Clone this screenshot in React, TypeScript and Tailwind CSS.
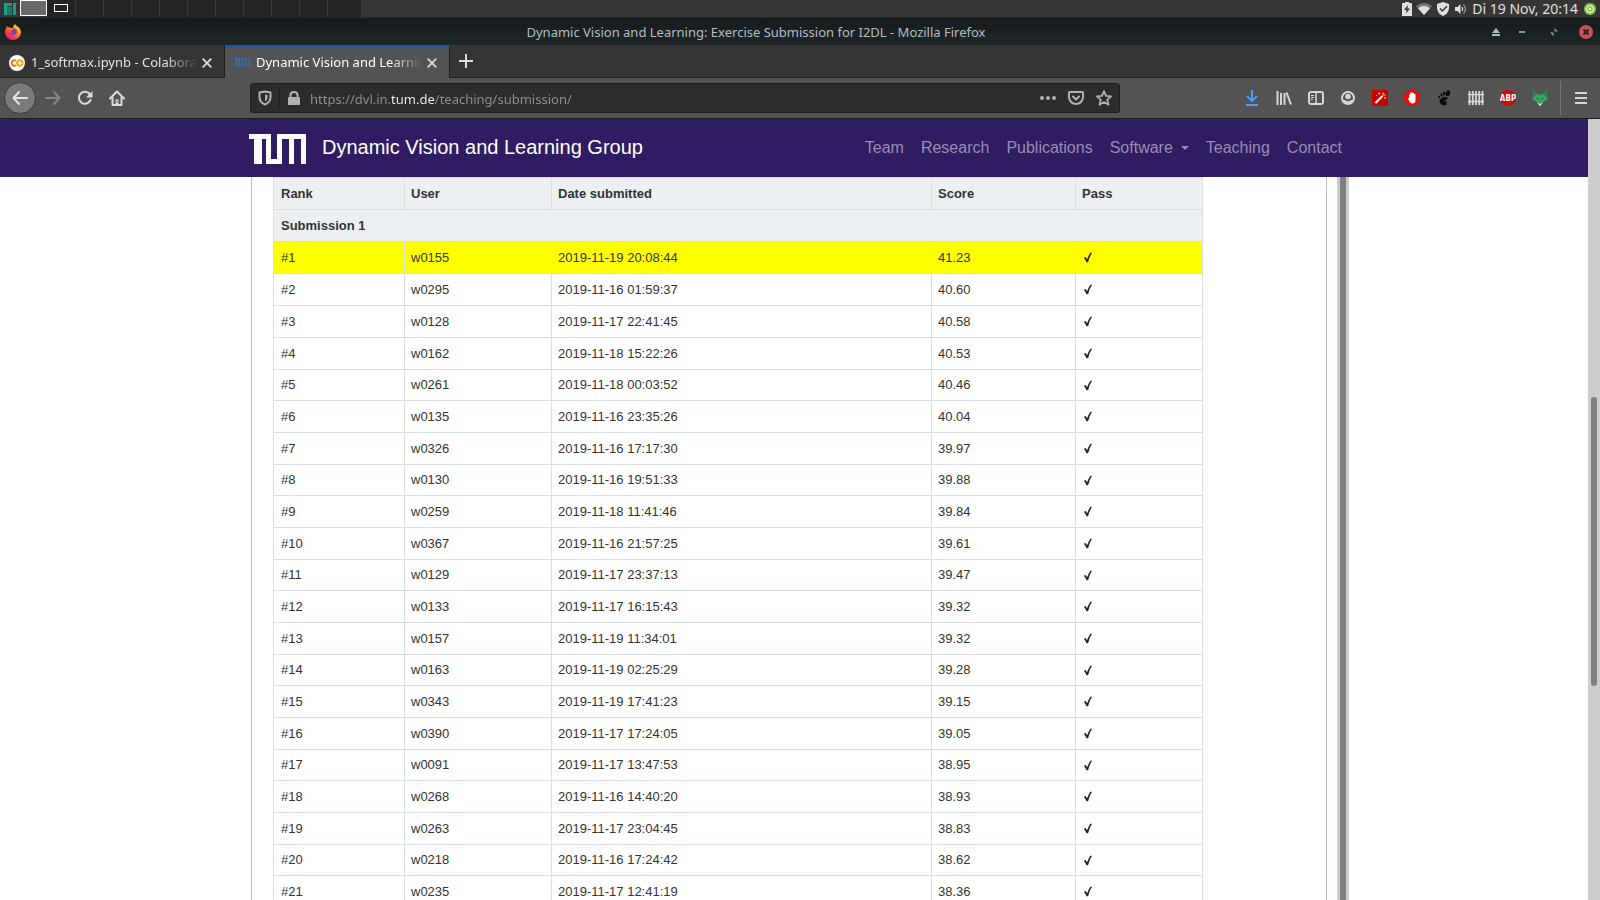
import React from "react";

type Row = [user: string, date: string, score: string];

const rows: Row[] = [
  ["w0155", "2019-11-19 20:08:44", "41.23"],
  ["w0295", "2019-11-16 01:59:37", "40.60"],
  ["w0128", "2019-11-17 22:41:45", "40.58"],
  ["w0162", "2019-11-18 15:22:26", "40.53"],
  ["w0261", "2019-11-18 00:03:52", "40.46"],
  ["w0135", "2019-11-16 23:35:26", "40.04"],
  ["w0326", "2019-11-16 17:17:30", "39.97"],
  ["w0130", "2019-11-16 19:51:33", "39.88"],
  ["w0259", "2019-11-18 11:41:46", "39.84"],
  ["w0367", "2019-11-16 21:57:25", "39.61"],
  ["w0129", "2019-11-17 23:37:13", "39.47"],
  ["w0133", "2019-11-17 16:15:43", "39.32"],
  ["w0157", "2019-11-19 11:34:01", "39.32"],
  ["w0163", "2019-11-19 02:25:29", "39.28"],
  ["w0343", "2019-11-19 17:41:23", "39.15"],
  ["w0390", "2019-11-17 17:24:05", "39.05"],
  ["w0091", "2019-11-17 13:47:53", "38.95"],
  ["w0268", "2019-11-16 14:40:20", "38.93"],
  ["w0263", "2019-11-17 23:04:45", "38.83"],
  ["w0218", "2019-11-16 17:24:42", "38.62"],
  ["w0235", "2019-11-17 12:41:19", "38.36"],
];

const TUM_PATH = "M0 0H22V25H28V0H57V30H52V5H45V30H40V5H33V30H17V5H13V30H5V5H0Z";

function Icon({ size = 16, children }: { size?: number; children: React.ReactNode }) {
  return (
    <svg width={size} height={size} viewBox="0 0 16 16" fill="none" aria-hidden="true" className="shrink-0">
      {children}
    </svg>
  );
}

function Panel() {
  return (
    <div className="flex h-[18px] shrink-0 items-stretch border-b border-[#252a29] bg-[#353535]">
      <button aria-label="Applications" className="flex w-5 items-center justify-end pr-1">
        <svg width="12" height="12" viewBox="0 0 12 12" fill="#16a085" aria-hidden="true">
          <path d="M0 0H8V3H3.5V12H0ZM4.5 4H8V12H4.5ZM9 0H12V12H9Z" />
          <path d="M4.5 4H8V12H4.5Z" fill="#12806b" />
        </svg>
      </button>
      <button aria-label="Workspace 1" className="h-4 w-[27px] border border-white bg-[#686868]" />
      <button
        aria-label="Workspace 2"
        className="flex w-[29px] items-center justify-center border-r border-[#383838] bg-[#232323] pb-px"
      >
        <span className="h-2 w-[14px] border border-white" />
      </button>
      {[3, 4, 5, 6, 7, 8, 9, 10, 11].map((n) => (
        <button key={n} aria-label={`Workspace ${n}`} className="w-7 border-r border-[#383838] bg-[#232323]" />
      ))}
      <button aria-label="Workspace 12" className="w-[33px] bg-[#232323]" />
      <div className="ml-auto flex items-center gap-1 pr-1 text-[#e0e0e0]">
        <svg width="10" height="14" viewBox="0 0 10 14" aria-hidden="true">
          <path fill="#dfdfdf" d="M3 0H7V1H10V14H0V1H3Z" />
          <path fill="#353535" d="M6 3 2 8H4.5L4 11.500 8 6.500H5.500Z" />
        </svg>
        <svg width="16" height="12" viewBox="0 0 16 12" aria-hidden="true">
          <path fill="#777" d="M0 3Q8-3 16 3L8 12Z" />
          <path fill="#dfdfdf" d="M2 5.200Q8 1 14 5.200L8 12Z" />
        </svg>
        <svg width="14" height="14" viewBox="0 0 14 14" aria-hidden="true">
          <path fill="#dfdfdf" d="M7 0 13 2V6Q13 11 7 14Q1 11 1 6V2Z" />
          <path fill="none" stroke="#353535" strokeWidth="1.500" d="M4 6.500 6.300 9 11 4.200" />
        </svg>
        <svg width="14" height="12" viewBox="0 0 14 12" aria-hidden="true">
          <path fill="#dfdfdf" d="M1 4H3.500L6.500 1V11L3.500 8H1Z" />
          <path fill="none" stroke="#dfdfdf" strokeWidth="1.200" d="M8 4Q9.500 6 8 8" />
          <path fill="none" stroke="#999" strokeWidth="1.200" d="M9.500 1.500Q13.500 6 9.500 10.500" />
        </svg>
        <time className="text-[14px] leading-4">Di 19 Nov, 20:14</time>
        <svg width="12" height="12" viewBox="0 0 12 12" className="ml-[2px]" aria-hidden="true">
          <circle cx="6" cy="6" r="6" fill="#87c540" />
          <circle cx="6" cy="6" r="3.500" fill="none" stroke="#fff" />
          <circle cx="6" cy="6" r="1.300" fill="#fff" />
        </svg>
      </div>
    </div>
  );
}

function FirefoxLogo() {
  return (
    <svg width="16" height="16" viewBox="0 0 16 16" aria-hidden="true">
      <defs>
        <linearGradient id="fx" x1="1" y1="0" x2=".2" y2="1">
          <stop offset="0" stopColor="#fff44f" />
          <stop offset=".4" stopColor="#ff980e" />
          <stop offset=".75" stopColor="#ff3647" />
          <stop offset="1" stopColor="#e31587" />
        </linearGradient>
      </defs>
      <path
        fill="url(#fx)"
        d="M10 0Q11.500 2 13 3L14 3.500Q16 6 16 8.500A8 7.500 0 0 1 0 8.500Q0 5 1.500 3.500V2L3.500 3.500 5 2.500V4L8 4Q8 1.500 10 0Z"
      />
      <path fill="#7b3fc8" d="M8 4.500Q12 4 12 8Q11.500 11 8 11Q5 11 4.500 8.500Q6 9.500 7.500 8.500L5 7 8 6Z" />
    </svg>
  );
}

function TitleBar() {
  return (
    <div className="grid h-[27px] shrink-0 grid-cols-[1fr_auto_1fr] items-center bg-linear-to-b from-[#151b1d] to-[#1f2628] pl-[5px] pr-[7px]">
      <FirefoxLogo />
      <p className="pr-[86px] text-[13px] leading-5 text-[#b5bcc4]">
        Dynamic Vision and Learning: Exercise Submission for I2DL - Mozilla Firefox
      </p>
      <div className="flex items-center justify-end gap-[18px]">
        <button aria-label="Shade">
          <svg width="8" height="8" viewBox="0 0 8 8" fill="#aebbbb" aria-hidden="true">
            <path d="M4 0 8 5H0ZM0 6H8V8H0Z" />
          </svg>
        </button>
        <button aria-label="Minimize">
          <svg width="8" height="8" viewBox="0 0 8 8" fill="#8d9999" aria-hidden="true">
            <path d="M1 3H7V5H1Z" />
          </svg>
        </button>
        <button aria-label="Restore" className="ml-[6px]">
          <svg width="8" height="8" viewBox="0 0 8 8" fill="#8d9999" aria-hidden="true">
            <path d="M4.500 0V3.500H8ZM0 4.500H3.500V8Z" />
          </svg>
        </button>
        <button aria-label="Close window" className="ml-[3px]">
          <svg width="14" height="14" viewBox="0 0 14 14" aria-hidden="true">
            <circle cx="7" cy="7" r="7" fill="#cb4f58" />
            <path d="M4.500 4.500 9.500 9.500M9.500 4.500 4.500 9.500" stroke="#222" strokeWidth="2" />
          </svg>
        </button>
      </div>
    </div>
  );
}

function CloseGlyph() {
  return (
    <svg width="10" height="10" viewBox="0 0 10 10" stroke="#dcdcdc" strokeWidth="1.800" aria-hidden="true">
      <path d="M.7.7 9.300 9.300M9.300.7.7 9.300" />
    </svg>
  );
}

function TabStrip() {
  return (
    <div className="flex h-[33px] shrink-0 items-stretch bg-[#353535] text-[13px] text-[#e4e4e4]" role="tablist">
      <div className="flex w-[225px] items-center border-b border-r border-[#202020] pl-[9px] pr-3 pt-[3px]">
        <svg width="16" height="16" viewBox="0 0 16 16" className="shrink-0" aria-hidden="true">
          <circle cx="8" cy="8" r="8" fill="#fff" />
          <g fill="none" strokeWidth="2">
            <circle cx="10.800" cy="8" r="2.700" stroke="#f9ab00" />
            <path d="M7 5.800A2.700 2.700 0 1 0 7 10.200" stroke="#e8710a" />
          </g>
        </svg>
        <button
          role="tab"
          aria-selected="false"
          className="ml-[6px] mr-1 min-w-0 flex-1 overflow-hidden whitespace-nowrap text-left mask-r-from-80%"
        >
          1_softmax.ipynb - Colaboratory
        </button>
        <button aria-label="Close tab 1">
          <CloseGlyph />
        </button>
      </div>
      <div className="flex w-[225px] items-center border-r border-t-2 border-r-[#202020] border-t-[#1557a0] bg-[#535353] pl-[9px] pr-3">
        <svg width="16" height="9" viewBox="0 0 57 30" className="shrink-0" aria-hidden="true">
          <path d={TUM_PATH} fill="#3070b3" />
        </svg>
        <button
          role="tab"
          aria-selected="true"
          className="ml-[6px] mr-1 min-w-0 flex-1 overflow-hidden whitespace-nowrap text-left text-white mask-r-from-80%"
        >
          Dynamic Vision and Learning
        </button>
        <button aria-label="Close tab 2">
          <CloseGlyph />
        </button>
      </div>
      <div className="flex flex-1 items-center border-b border-[#202020] pl-[9px]">
        <button aria-label="New tab">
          <svg width="14" height="14" viewBox="0 0 14 14" stroke="#dcdcdc" strokeWidth="2" aria-hidden="true">
            <path d="M7 0V14M0 7H14" />
          </svg>
        </button>
      </div>
    </div>
  );
}

function Toolbar() {
  return (
    <div className="flex h-[41px] shrink-0 items-center border-b border-[#1c1a26] bg-[#535353] pl-1 pr-[13px]">
      <div className="flex min-w-0 flex-[246] items-center">
        <button
          aria-label="Back"
          className="flex size-8 items-center justify-center rounded-full border border-[#3b3b3b] bg-[#7a7a7a]"
        >
          <Icon>
            <path d="M15 8H1.500M7 2 1.500 8 7 14" stroke="#e2e2e2" strokeWidth="2" strokeLinecap="round" strokeLinejoin="round" />
          </Icon>
        </button>
        <button aria-label="Forward" className="ml-[9px]">
          <Icon>
            <path d="M1 8H14.500M9 2 14.500 8 9 14" stroke="#858585" strokeWidth="2" strokeLinecap="round" strokeLinejoin="round" />
          </Icon>
        </button>
        <button aria-label="Reload" className="ml-4">
          <Icon>
            <path d="M13 4.500A6 6 0 1 0 13.500 10" stroke="#dcdcdc" strokeWidth="2" strokeLinecap="round" />
            <path d="M15.500 1V7.500H9Z" fill="#dcdcdc" />
          </Icon>
        </button>
        <button aria-label="Home" className="ml-4">
          <Icon>
            <path d="M1 8.500 8 1.500 15 8.500M3.500 7.500V15H12.500V7.500" stroke="#dcdcdc" strokeWidth="2" strokeLinecap="round" strokeLinejoin="round" />
            <path d="M6.500 9.500H9.500V15H6.500Z" fill="#dcdcdc" />
            <path d="M7.500 11H8.500V12.500H7.500Z" fill="#535353" />
          </Icon>
        </button>
      </div>
      <div className="flex h-[30px] w-[870px] items-center rounded-[3px] border border-[#1e1e1e] bg-[#2c2c2c] pl-[6px] pr-[7px]">
        <button aria-label="Tracking protection">
          <Icon>
            <path d="M8 1.500 13.500 2.500V7Q13.500 12.500 8 14.500Q2.500 12.500 2.500 7V2.500Z" stroke="#b1b1b1" strokeWidth="2" strokeLinejoin="round" />
            <path d="M8 4.500 10.500 5V7.500Q10.500 10 8 11.500Z" fill="#b1b1b1" />
          </Icon>
        </button>
        <span className="ml-[6px] h-[22px] w-px bg-[#1e1e1e]" />
        <button aria-label="Site information" className="ml-[6px]">
          <Icon>
            <path d="M4.500 8V5Q4.500 2 8 2T11.500 5V8" stroke="#b1b1b1" strokeWidth="2" />
            <path d="M3 7H13Q14 7 14 8V15H2V8Q2 7 3 7Z" fill="#b1b1b1" />
          </Icon>
        </button>
        <input
          aria-label="Address"
          defaultValue="https://dvl.in.tum.de/teaching/submission/"
          className="ml-2 h-6 min-w-0 flex-1 bg-[linear-gradient(to_right,#909090_81px,#f4f4f4_81px,#f4f4f4_125px,#909090_125px)] bg-clip-text pt-[2px] text-[13px] text-transparent outline-none"
        />
        <div className="flex items-center gap-3">
          <button aria-label="Page actions">
            <Icon>
              <g fill="#b1b1b1">
                <circle cx="2" cy="8" r="2" />
                <circle cx="8" cy="8" r="2" />
                <circle cx="14" cy="8" r="2" />
              </g>
            </Icon>
          </button>
          <button aria-label="Save to Pocket">
            <Icon>
              <path d="M2 2H14Q15 2 15 3V7A7 7 0 0 1 1 7V3Q1 2 2 2Z" stroke="#b1b1b1" strokeWidth="2" />
              <path d="M5 6.500 8 9.500 11 6.500" stroke="#b1b1b1" strokeWidth="2" strokeLinecap="round" strokeLinejoin="round" />
            </Icon>
          </button>
          <button aria-label="Bookmark this page">
            <Icon>
              <path d="M8 1.200 10 5.800 15 6.300 11.300 9.700 12.400 14.700 8 12.100 3.600 14.700 4.700 9.700 1 6.300 6 5.800Z" stroke="#b1b1b1" strokeWidth="1.800" strokeLinejoin="round" />
            </Icon>
          </button>
        </div>
      </div>
      <div className="flex min-w-0 flex-[467] items-center justify-end gap-4 text-[#d6d6d6]">
        <button aria-label="Downloads">
          <Icon>
            <path d="M8 0V11M3 6 8 11 13 6M2 15H14" stroke="#45a1ff" strokeWidth="2" />
          </Icon>
        </button>
        <button aria-label="Library">
          <Icon>
            <path d="M1.500 1V15M5 3V15M8.500 3V15M10.500 2.500 15 14.500" stroke="currentColor" strokeWidth="2" />
          </Icon>
        </button>
        <button aria-label="Sidebars">
          <Icon>
            <rect x="1" y="2" width="14" height="12" rx="2" stroke="currentColor" strokeWidth="2" />
            <path d="M8 2V14" stroke="currentColor" strokeWidth="1.500" />
            <path d="M3 5.500H6M3 7.500H6M3 9.500H5" stroke="currentColor" />
          </Icon>
        </button>
        <button aria-label="Account">
          <Icon>
            <circle cx="8" cy="8" r="6" stroke="currentColor" strokeWidth="2" />
            <circle cx="8" cy="6.500" r="2.800" fill="currentColor" />
            <path d="M3 10H5Q8 12.500 11 10H13Q12 13.500 8 14Q4 13.500 3 10Z" fill="currentColor" />
          </Icon>
        </button>
        <button aria-label="Magic wand">
          <Icon>
            <path d="M0 0H16V16H0Z" fill="#c90000" />
            <path d="M3.500 13 10.500 6" stroke="#fff" strokeWidth="2" />
            <path d="M6 3.500H8M7 2.500V4.500M11 2.500V5M13.500 4.500 11.500 5.500M12 8H14M4 5.500H5" stroke="#ffd0d0" />
          </Icon>
        </button>
        <button aria-label="Content blocker">
          <Icon>
            <path d="M5 0H11L16 5V11L11 16H5L0 11V5Z" fill="#e50d0d" />
            <path d="M5 5Q5.500 4 6 5V3Q7 2 7.500 3Q8.300 1.500 9 3Q10 2.500 10.300 4Q11.500 3.500 11.500 5V11Q11 13.500 8.500 13.500Q6.500 13.500 5.500 11.500L4 8.500 5 8Z" fill="#fff" />
          </Icon>
        </button>
        <button aria-label="GNOME Shell integration">
          <Icon>
            <g fill="#0a0a0a">
              <ellipse cx="12" cy="3.300" rx="2" ry="3" transform="rotate(20 12 3.300)" />
              <ellipse cx="8.300" cy="3.400" rx="1.200" ry="1.900" />
              <ellipse cx="5.500" cy="5" rx="1" ry="1.500" transform="rotate(-15 5.500 5)" />
              <ellipse cx="3.200" cy="7" rx=".9" ry="1.300" transform="rotate(-25 3.200 7)" />
              <path d="M4 9.500Q6 6.800 9 7Q12.500 7 11.500 9Q10.500 10 9 10Q8 11 9.500 11.500Q11 11 11 12.500Q10.500 15.500 8 15.500Q4.500 15 3.500 11.500Z" />
            </g>
          </Icon>
        </button>
        <button aria-label="Fence">
          <Icon>
            <path d="M1.500 1V15M4.800 1V15M8 1V15M11.200 1V15M14.500 1V15" stroke="currentColor" strokeWidth="1.800" />
            <path d="M0 4.500H16M0 11.500H16" stroke="currentColor" strokeWidth="1.300" />
          </Icon>
        </button>
        <button aria-label="Adblock Plus" className="size-4">
          <svg width="16" height="16" viewBox="0 0 16 16" aria-hidden="true">
            <path d="M5 0H11L16 5V11L11 16H5L0 11V5Z" fill="#c70d0d" />
            <text x="8" y="11" textAnchor="middle" fontSize="8" fontWeight="700" fill="#fff" fontFamily="DejaVu Sans Condensed, DejaVu Sans, sans-serif">
              ABP
            </text>
          </svg>
        </button>
        <button aria-label="Fox">
          <Icon>
            <path d="M1 0 5.500 4.500H10.500L15 0 14.500 7.500 15.500 9.500 12 11.500 8 16 4 11.500.5 9.500 1.500 7.500Z" fill="#2fa85c" />
            <path d="M1 0 4 4 2.500 7ZM15 0 12 4 13.500 7Z" fill="#1b7d3a" />
            <path d="M5 12.500 8 14 11 12.500 8 16Z" fill="#f0f0f0" />
            <path d="M4.500 8 6.500 9M11.500 8 9.500 9" stroke="#14602c" />
          </Icon>
        </button>
        <span className="-ml-1 h-[34px] w-px bg-[#777]" />
        <button aria-label="Menu" className="-ml-1 -mr-[2px] w-4">
          <Icon>
            <path d="M2 3H14M2 8H14M2 13H14" stroke="currentColor" strokeWidth="2" />
          </Icon>
        </button>
      </div>
    </div>
  );
}

function SiteHeader() {
  return (
    <header className="shrink-0 bg-[#301c63]">
      <div className="mx-auto flex h-[58px] max-w-[1140px] items-center pl-[25px] pr-[22px]">
        <a href="#home" className="flex items-center gap-4 pb-[2px] text-[20px] text-white">
          <svg width="57" height="30" viewBox="0 0 57 30" className="mt-1" role="img" aria-label="TUM">
            <path d={TUM_PATH} fill="#fff" />
          </svg>
          Dynamic Vision and Learning Group
        </a>
        <nav className="ml-auto flex items-center gap-[17px] text-[16px] text-[#978db1]">
          <a href="#team">Team</a>
          <a href="#research">Research</a>
          <a href="#publications">Publications</a>
          <a href="#software" className="flex items-center gap-2">
            Software
            <svg width="8" height="4" viewBox="0 0 8 4" fill="currentColor" aria-hidden="true">
              <path d="M0 0H8L4 4Z" />
            </svg>
          </a>
          <a href="#teaching">Teaching</a>
          <a href="#contact">Contact</a>
        </nav>
      </div>
    </header>
  );
}

function PassMark() {
  return (
    <svg width="13" height="11" viewBox="0 0 13 11" role="img" aria-label="Passed" className="pl-[2px]">
      <path d="M0 6Q1 4.800 2 5L3.600 7.600Q5.500 3 7.500 0H9.500Q6.500 4.500 4.800 11H3Q1.800 8 0 6Z" fill="#262626" />
    </svg>
  );
}

function Leaderboard() {
  return (
    <table className="w-[930px] table-fixed border-collapse text-left text-[13px] leading-5 text-[#333] [&_td]:border [&_td]:border-[#d8dfe7] [&_td]:px-[6px] [&_td]:py-0 [&_th]:border [&_th]:border-[#d8dfe7] [&_th]:px-[6px] [&_th]:py-0 [&_tr>:first-child]:pl-[7px]">
      <colgroup>
        <col className="w-[131px]" />
        <col className="w-[147px]" />
        <col className="w-[380px]" />
        <col className="w-[144px]" />
        <col />
      </colgroup>
      <thead className="bg-[#ecf0f3]">
        <tr className="h-8">
          <th scope="col">Rank</th>
          <th scope="col">User</th>
          <th scope="col">Date submitted</th>
          <th scope="col">Score</th>
          <th scope="col">Pass</th>
        </tr>
        <tr className="h-8">
          <th colSpan={5} scope="colgroup">
            Submission 1
          </th>
        </tr>
      </thead>
      <tbody>
        {rows.map(([user, date, score], i) => (
          <tr key={user} className="h-8 first:bg-[#ffff00] nth-[3n+5]:h-[31px]">
            <td>#{i + 1}</td>
            <td>{user}</td>
            <td>{date}</td>
            <td>{score}</td>
            <td>
              <PassMark />
            </td>
          </tr>
        ))}
      </tbody>
    </table>
  );
}

export default function App() {
  return (
    <div className="flex h-screen flex-col overflow-hidden bg-white font-['Noto_Sans',sans-serif]">
      <Panel />
      <TitleBar />
      <TabStrip />
      <Toolbar />
      <div className="flex min-h-0 flex-1 font-['Liberation_Sans',Arial,sans-serif]">
        <div className="flex min-w-0 flex-1 flex-col">
          <SiteHeader />
          <main className="mx-auto flex min-h-0 w-full max-w-[1140px] flex-1 pl-[27px] pr-[15px]">
            <div className="min-w-0 flex-1 overflow-hidden border-x border-[#bdbdbd] pl-[21px]">
              <Leaderboard />
            </div>
            <div className="ml-[10px] w-3 border-x-[3px] border-[#cccccc] bg-[#7d8181]" />
          </main>
        </div>
        <div className="flex w-3 flex-col bg-[#cdcdcd] px-[3px]">
          <div className="flex-[278]" />
          <div className="flex-[289] rounded-full bg-[#7d8181]" />
          <div className="flex-[214]" />
        </div>
      </div>
    </div>
  );
}
